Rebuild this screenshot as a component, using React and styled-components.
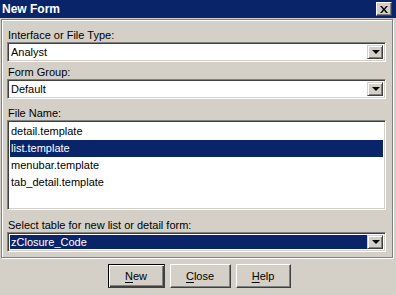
import React from 'react';
import styled, { createGlobalStyle } from 'styled-components';

const GlobalStyle = createGlobalStyle`
  body {
    margin: 0;
    background: #d4d0c8;
  }
`;

const Window = styled.div`
  width: 396px;
  height: 295px;
  background: #d4d0c8;
  font-family: 'Liberation Sans', Arial, sans-serif;
  font-size: 11px;
  color: #000;
  display: flex;
  flex-direction: column;
  overflow: hidden;
`;

const TitleBar = styled.div`
  height: 18px;
  background: #0a246a;
  display: flex;
  align-items: center;
  justify-content: space-between;
  padding: 0 4px 0 2px;
  flex-shrink: 0;
`;

const Title = styled.span`
  color: #fff;
  font-weight: bold;
  font-size: 12px;
`;

const CloseBox = styled.div`
  width: 16px;
  height: 14px;
  box-sizing: border-box;
  background: #d4d0c8;
  border-top: 1px solid #fff;
  border-left: 1px solid #fff;
  border-right: 1px solid #404040;
  border-bottom: 1px solid #404040;
  box-shadow: inset -1px -1px 0 #808080;
  display: flex;
  align-items: center;
  justify-content: center;
`;

const Group = styled.div`
  margin: 1px 3px 0 1px;
  border: 1px solid #808080;
  box-shadow: inset 1px 1px 0 #fff, 1px 1px 0 #fff;
  padding: 9px 6px 5px 5px;
  display: flex;
  flex-direction: column;
`;

const Label = styled.div`
  height: 13px;
  line-height: 13px;
  margin-top: ${p => p.$gap || 0}px;
  padding-left: 1px;
`;

const Sunken = styled.div`
  box-sizing: border-box;
  border-top: 1px solid #808080;
  border-left: 1px solid #808080;
  border-right: 1px solid #fff;
  border-bottom: 1px solid #fff;
  box-shadow: inset 1px 1px 0 #404040, inset -1px -1px 0 #d4d0c8;
  padding: 2px;
`;

const Combo = styled(Sunken)`
  height: 20px;
  display: flex;
  align-items: stretch;
  background: #fff;
`;

const ComboText = styled.div`
  flex: 1;
  display: flex;
  align-items: center;
  padding-left: 1px;
  font-size: 11px;
  background: ${p => (p.$selected ? '#0a246a' : '#fff')};
  color: ${p => (p.$selected ? '#fff' : '#000')};
`;

const DropButton = styled.div`
  width: 16px;
  box-sizing: border-box;
  background: #d4d0c8;
  border-top: 1px solid #d4d0c8;
  border-left: 1px solid #d4d0c8;
  border-right: 1px solid #404040;
  border-bottom: 1px solid #404040;
  box-shadow: inset 1px 1px 0 #fff, inset -1px -1px 0 #808080;
  display: flex;
  align-items: center;
  justify-content: center;
`;

const Arrow = styled.div`
  width: 0;
  height: 0;
  border-left: 4px solid transparent;
  border-right: 4px solid transparent;
  border-top: 4px solid #000;
  margin-left: 1px;
`;

const ListBox = styled(Sunken)`
  height: 90px;
  background: #fff;
  padding: 2px 2px;
`;

const Item = styled.div`
  height: 17px;
  line-height: 17px;
  padding-left: 1px;
  font-size: 11px;
  background: ${p => (p.$selected ? '#0a246a' : 'transparent')};
  color: ${p => (p.$selected ? '#fff' : '#000')};
`;

const ButtonRow = styled.div`
  display: flex;
  justify-content: center;
  gap: 5px;
  margin-top: 6px;
  padding-left: 2px;
`;

const Button = styled.div`
  width: ${p => p.$w}px;
  height: 24px;
  box-sizing: border-box;
  display: flex;
  align-items: center;
  justify-content: center;
  font-size: 11px;
  background: #d4d0c8;
  border-top: 1px solid ${p => (p.$default ? '#000' : '#fff')};
  border-left: 1px solid ${p => (p.$default ? '#000' : '#fff')};
  border-right: 1px solid #404040;
  border-bottom: 1px solid #404040;
  box-shadow: ${p =>
    p.$default
      ? 'inset 1px 1px 0 #fff, inset -1px -1px 0 #404040, inset -2px -2px 0 #808080'
      : 'inset -1px -1px 0 #808080'};
`;

const Key = styled.span`
  text-decoration: underline;
  text-underline-offset: 2px;
`;

const files = ['detail.template', 'list.template', 'menubar.template', 'tab_detail.template'];

function ComboBox({ value, selected }) {
  return (
    <Combo>
      <ComboText $selected={selected}>{value}</ComboText>
      <DropButton>
        <Arrow />
      </DropButton>
    </Combo>
  );
}

export default function App() {
  return (
    <Window>
      <GlobalStyle />
      <TitleBar>
        <Title>New Form</Title>
        <CloseBox>
          <svg width="8" height="7" viewBox="0 0 8 7">
            <path d="M0 0h2l2 2.5L6 0h2L5 3.5 8 7H6L4 4.5 2 7H0l3-3.5z" fill="#000" />
          </svg>
        </CloseBox>
      </TitleBar>
      <Group>
        <Label>Interface or File Type:</Label>
        <ComboBox value="Analyst" />
        <Label $gap={4}>Form Group:</Label>
        <ComboBox value="Default" />
        <Label $gap={8}>File Name:</Label>
        <ListBox>
          {files.map(f => (
            <Item key={f} $selected={f === 'list.template'}>{f}</Item>
          ))}
        </ListBox>
        <Label $gap={9}>Select table for new list or detail form:</Label>
        <ComboBox value="zClosure_Code" selected />
      </Group>
      <ButtonRow>
        <Button $w={57} $default><span><Key>N</Key>ew</span></Button>
        <Button $w={61}><span><Key>C</Key>lose</span></Button>
        <Button $w={55}><span><Key>H</Key>elp</span></Button>
      </ButtonRow>
    </Window>
  );
}
